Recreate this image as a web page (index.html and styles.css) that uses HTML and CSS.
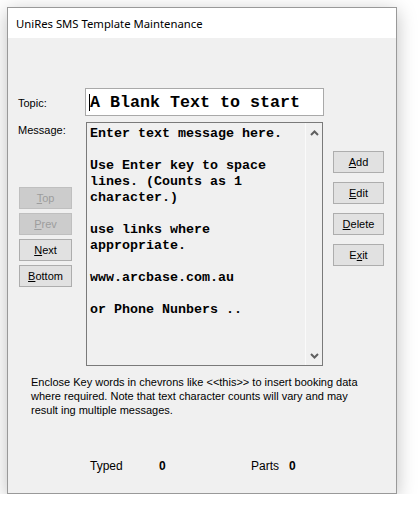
FILE: index.html
```html
<!DOCTYPE html>
<html lang="en">
<head>
    <meta charset="UTF-8" />
    <meta name="viewport" content="width=device-width, initial-scale=1.0"/>
    <title>UniRes SMS Template Maintenance</title>
    <link rel="stylesheet" href="styles.css">
</head>
<body>
    <div class="window">
        <div class="titlebar">UniRes SMS Template Maintenance</div>

        <div class="form">
            <div class="topic-row">
                <label class="field-label topic-label">Topic:</label>
                <div class="topic-input"><span class="caret"></span>A Blank Text to start</div>
            </div>

            <div class="message-row">
                <div class="side">
                    <label class="field-label">Message:</label>
                    <div class="nav-buttons">
                        <button class="btn" disabled><u>T</u>op</button>
                        <button class="btn" disabled><u>P</u>rev</button>
                        <button class="btn"><u>N</u>ext</button>
                        <button class="btn"><u>B</u>ottom</button>
                    </div>
                </div>

                <div class="message-box">
                    <div class="message-text">Enter text message here.

Use Enter key to space
lines. (Counts as 1
character.)

use links where
appropriate.

www.arcbase.com.au

or Phone Nunbers ..</div>
                    <div class="scrollbar">
                        <svg width="9" height="6" viewBox="0 0 9 6"><polyline points="1,5 4.5,1.5 8,5" fill="none" stroke="#606060" stroke-width="2"/></svg>
                        <svg width="9" height="6" viewBox="0 0 9 6"><polyline points="1,1 4.5,4.5 8,1" fill="none" stroke="#606060" stroke-width="2"/></svg>
                    </div>
                </div>

                <div class="actions">
                    <button class="btn"><u>A</u>dd</button>
                    <button class="btn"><u>E</u>dit</button>
                    <button class="btn"><u>D</u>elete</button>
                    <button class="btn">E<u>x</u>it</button>
                </div>
            </div>

            <p class="note">Enclose Key words in chevrons like &lt;&lt;this&gt;&gt; to insert booking data where required. Note that text character counts will vary and may result ing multiple messages.</p>

            <div class="stats">
                <div class="stat stat-typed"><span class="stat-label">Typed</span><b>0</b></div>
                <div class="stat"><span class="stat-label parts-label">Parts</span><b>0</b></div>
            </div>
        </div>
    </div>
</body>
</html>
```

FILE: styles.css
```css
* {
    box-sizing: border-box;
}

body {
    margin: 0;
    background: #fff;
    font-family: "Liberation Sans", Arial, sans-serif;
    font-size: 11px;
    color: #000;
}

.window {
    margin: 7px 0 0 7px;
    width: 390px;
    height: 487px;
    border: 1px solid #999;
    background: #f0f0f0;
    box-shadow: 0 4px 18px rgba(0, 0, 0, 0.25);
    display: flex;
    flex-direction: column;
}

.titlebar {
    height: 30px;
    background: #fff;
    padding-left: 8px;
    display: flex;
    align-items: center;
    font-family: "Noto Sans", "Open Sans", sans-serif;
    font-size: 11.3px;
}

.form {
    padding-top: 50px;
}

.topic-row {
    display: flex;
    align-items: center;
}

.field-label {
    display: block;
    padding-left: 10px;
    line-height: 13px;
}

.topic-label {
    width: 77px;
    padding-top: 2px;
}

.topic-input {
    width: 239px;
    height: 28px;
    border: 1px solid #a9a9a9;
    background: #fff;
    padding-left: 3px;
    display: flex;
    align-items: center;
    font-family: "Liberation Mono", "Courier New", monospace;
    font-weight: bold;
    font-size: 16.67px;
    white-space: pre;
}

.caret {
    display: inline-block;
    width: 1px;
    height: 17px;
    background: #000;
}

.message-row {
    display: flex;
    margin-top: 6px;
}

.side {
    width: 78px;
    padding-top: 2px;
}

.nav-buttons {
    display: flex;
    flex-direction: column;
    gap: 4px;
    margin: 50px 0 0 11px;
}

.btn {
    width: 53px;
    height: 22px;
    padding: 0;
    border: 1px solid #adadad;
    background: #e1e1e1;
    font-family: "Liberation Sans", Arial, sans-serif;
    font-size: 11px;
    color: #000;
}

.btn:disabled {
    background: #cccccc;
    border-color: #bfbfbf;
    color: #9d9d9d;
}

.message-box {
    width: 237px;
    height: 244px;
    border: 1px solid #7a7a7a;
    display: flex;
}

.message-text {
    flex: 1;
    padding: 3px 3px;
    font-family: "Liberation Mono", "Courier New", monospace;
    font-weight: bold;
    font-size: 13.33px;
    line-height: 16px;
    white-space: pre;
}

.scrollbar {
    width: 17px;
    border-left: 1px solid #fafafa;
    display: flex;
    flex-direction: column;
    justify-content: space-between;
    align-items: center;
    padding: 7px 0 6px;
}

.actions {
    display: flex;
    flex-direction: column;
    gap: 9px;
    margin-left: 10px;
    padding-top: 29px;
}

.actions .btn {
    width: 51px;
}

.note {
    margin: 9px 0 0;
    padding-left: 23px;
    width: 360px;
    line-height: 14px;
}

.stats {
    display: flex;
    margin-top: 42px;
    padding-left: 82px;
    font-size: 12px;
    line-height: 14px;
}

.stat-typed {
    width: 161px;
}

.stat-label {
    display: inline-block;
    width: 69px;
}

.parts-label {
    width: 38px;
}
```
